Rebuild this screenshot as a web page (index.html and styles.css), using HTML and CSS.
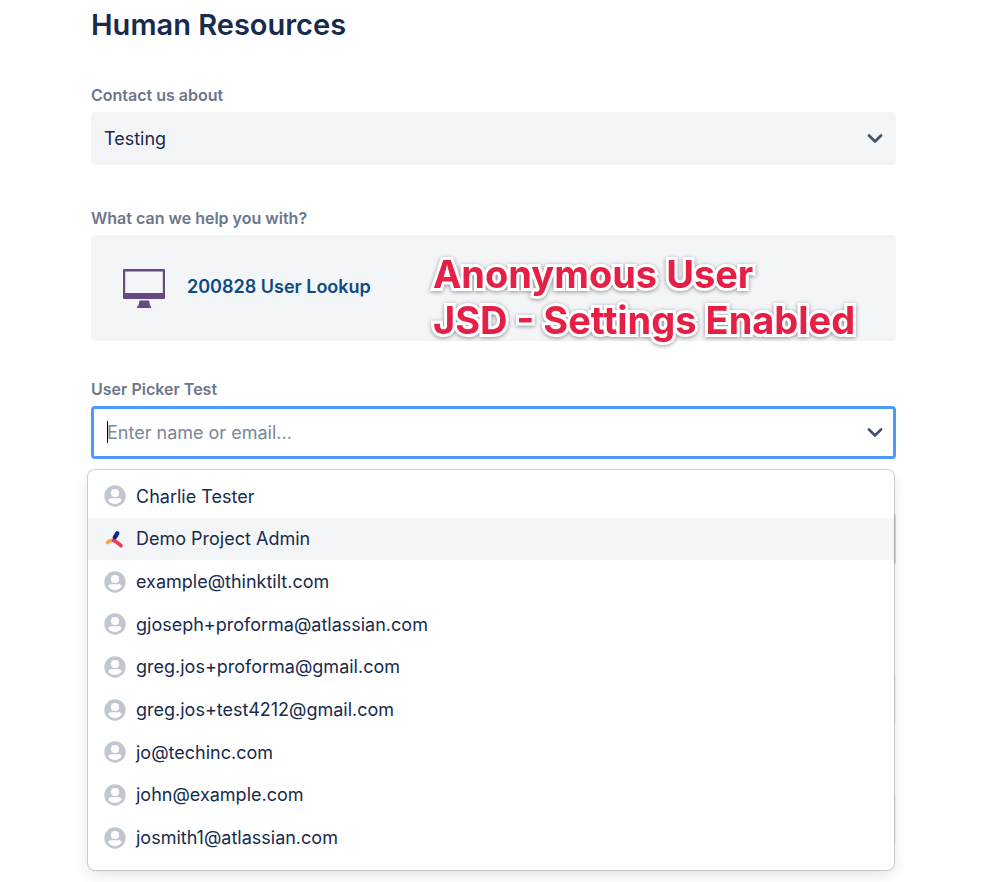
FILE: index.html
```html
<!DOCTYPE html>
<html lang="en">
<head>
    <meta charset="UTF-8">
    <meta name="viewport" content="width=device-width, initial-scale=1.0">
    <title>Human Resources</title>
    <link rel="stylesheet" href="styles.css">
</head>
<body>
    <!-- Shared icons -->
    <svg class="sprite" aria-hidden="true">
        <symbol id="avatar" viewBox="0 0 22 22">
            <circle cx="11" cy="11" r="10.7" fill="#c1c7d0"/>
            <circle cx="11" cy="8" r="4.1" fill="#fff"/>
            <path d="M4.3 15.6c0-1.5 1.1-2.4 2.6-2.4h8.2c1.5 0 2.6.9 2.6 2.4-1.5 2.2-3.9 3.5-6.7 3.5s-5.2-1.3-6.7-3.5z" fill="#fff"/>
        </symbol>
        <symbol id="chevron" viewBox="0 0 16 10">
            <path d="M2 1.500l6 6 6-6" fill="none" stroke="#42526e" stroke-width="2.600" stroke-linecap="round" stroke-linejoin="round"/>
        </symbol>
    </svg>

    <main class="portal">
        <h1 class="title">Human Resources</h1>

        <form class="request-form">
            <div class="field group">
                <label class="label" for="group">Contact us about</label>
                <div class="control">
                    <select class="select" id="group">
                        <option>Testing</option>
                    </select>
                    <svg class="chevron"><use href="#chevron"/></svg>
                </div>
            </div>

            <div class="field">
                <h2 class="label">What can we help you with?</h2>
                <div class="request-type">
                    <svg class="request-icon" viewBox="0 0 42 40">
                        <path fill="#654982" fill-rule="evenodd" d="M1 0h40a1 1 0 0 1 1 1v28a1 1 0 0 1-1 1H1a1 1 0 0 1-1-1V1a1 1 0 0 1 1-1zM2.200 2.500v21.500h37.600V2.500z"/>
                        <path fill="#654982" d="M16.500 31.500h9.500l1 5 1 1v1.500H14v-1.500l1.500-1z"/>
                    </svg>
                    <a class="request-link" href="#">200828 User Lookup</a>
                    <p class="note">Anonymous User<br>JSD - Settings Enabled</p>
                </div>
            </div>

            <div class="field picker">
                <label class="label" for="user">User Picker Test</label>
                <div class="control">
                    <input class="input" id="user" type="text" placeholder="Enter name or email...">
                    <span class="caret"></span>
                    <svg class="chevron"><use href="#chevron"/></svg>
                </div>

                <ul class="menu">
                    <li class="option"><svg class="avatar"><use href="#avatar"/></svg>Charlie Tester</li>
                    <li class="option active">
                        <svg class="avatar" viewBox="0 0 22 22">
                            <path d="M3.500 14.500c1.500-1.700 3-2.300 5.500-2.300" fill="none" stroke="#ffa136" stroke-width="3.600" stroke-linecap="round"/>
                            <path d="M9.500 12.500c2.500.5 4.500 2.500 7.500 5.200" fill="none" stroke="#f0385a" stroke-width="3.600" stroke-linecap="round"/>
                            <path d="M10.800 9.300L13.300 5.300" stroke="#14248a" stroke-width="4.400" stroke-linecap="round"/>
                        </svg>Demo Project Admin
                    </li>
                    <li class="option"><svg class="avatar"><use href="#avatar"/></svg>example@thinktilt.com</li>
                    <li class="option"><svg class="avatar"><use href="#avatar"/></svg>gjoseph+proforma@atlassian.com</li>
                    <li class="option"><svg class="avatar"><use href="#avatar"/></svg>greg.jos+proforma@gmail.com</li>
                    <li class="option"><svg class="avatar"><use href="#avatar"/></svg>greg.jos+test4212@gmail.com</li>
                    <li class="option"><svg class="avatar"><use href="#avatar"/></svg>jo@techinc.com</li>
                    <li class="option"><svg class="avatar"><use href="#avatar"/></svg>john@example.com</li>
                    <li class="option"><svg class="avatar"><use href="#avatar"/></svg>josmith1@atlassian.com</li>
                </ul>
            </div>

            <!-- Fields that the open menu covers -->
            <div class="more">
                <div class="box first"></div>
                <div class="box"></div>
                <div class="box"></div>
            </div>
        </form>
    </main>
</body>
</html>
```
FILE: styles.css
```css
* {
    box-sizing: border-box;
}
body {
    margin: 0;
    background-color: #fff;
    color: #172b4d;
    font-family: Inter, "Liberation Sans", sans-serif;
    font-size: 18px;
}
.sprite {
    display: none;
}
.portal {
    min-height: 100vh;
    padding: 5px 103px 0 91px;
}
.title {
    margin: 0;
    font-size: 29px;
    line-height: 40px;
    font-weight: 600;
}
.request-form {
    display: flex;
    flex-direction: column;
    gap: 36px;
    margin-top: 38px;
}
.field {
    display: flex;
    flex-direction: column;
    gap: 5px;
}
.group {
    padding-bottom: 5px;
}
.label {
    margin: 0;
    color: #6b778c;
    font-size: 16px;
    line-height: 24px;
    font-weight: 600;
}
.control {
    position: relative;
}
.select,
.input {
    display: block;
    width: 100%;
    height: 53px;
    padding: 0 13px;
    border: 0;
    border-radius: 4px;
    background-color: #f4f5f7;
    color: #172b4d;
    font: inherit;
    appearance: none;
    outline: none;
}
.input {
    border: 3px solid #4c9aff;
    background-color: #fff;
}
.input::placeholder {
    color: #7a869a;
    opacity: 1;
}
.caret {
    position: absolute;
    left: 16px;
    top: 15px;
    width: 1px;
    height: 22px;
    background-color: #000;
}
.chevron {
    position: absolute;
    right: 13px;
    top: 22px;
    width: 16px;
    height: 10px;
    pointer-events: none;
}
.request-type {
    position: relative;
    display: flex;
    align-items: center;
    height: 106px;
    padding: 2px 32px 0;
    border-radius: 4px;
    background-color: #f4f5f7;
}
.request-icon {
    width: 42px;
    height: 40px;
}
.request-link {
    margin-left: 22px;
    padding-bottom: 6px;
    color: #0b4a84;
    font-weight: 600;
    text-decoration: none;
}
.note {
    position: absolute;
    left: 342px;
    top: 16px;
    margin: 0;
    color: #e51f45;
    font-size: 38px;
    line-height: 46px;
    font-weight: 700;
    white-space: nowrap;
    -webkit-text-stroke: 6px #fff;
    paint-order: stroke fill;
    filter: drop-shadow(0 1px 2px rgba(0,0,0,0.4));
}
.picker {
    position: relative;
}
.menu {
    position: absolute;
    z-index: 2;
    top: 93px;
    left: -3px;
    right: 2px;
    display: grid;
    grid-auto-rows: 1fr;
    height: 400px;
    margin: 0;
    padding: 5px 0 11px;
    list-style: none;
    border-radius: 7px;
    background-color: #fff;
    box-shadow: 0 0 0 1px rgba(0,0,0,0.16), 0 5px 14px rgba(0,0,0,0.11);
}
.option {
    display: flex;
    align-items: center;
    gap: 10px;
    padding: 0 16px;
}
.option.active {
    background-color: #f4f5f7;
}
.avatar {
    width: 22px;
    height: 22px;
}
.more {
    display: flex;
    flex-direction: column;
    gap: 68px;
    padding-top: 18px;
}
.box {
    height: 52px;
    border-radius: 4px;
    background-color: #f4f5f7;
}
.box.first {
    margin-bottom: 39px;
    background-color: #d5d7e0;
}
```
